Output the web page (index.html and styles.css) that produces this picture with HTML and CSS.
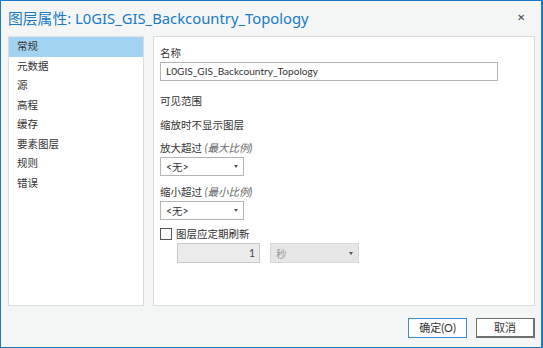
FILE: index.html
```html
<!DOCTYPE html>
<html>
<head>
<meta charset="utf-8">
<title>图层属性</title>
<link rel="stylesheet" href="styles.css">
</head>
<body>
<div class="window">
  <div class="titlebar">
    <span class="title">图层属性: L0GIS_GIS_Backcountry_Topology</span>
    <span class="close">&#x2715;</span>
  </div>
  <div class="main">
    <ul class="nav">
      <li class="active">常规</li>
      <li>元数据</li>
      <li>源</li>
      <li>高程</li>
      <li>缓存</li>
      <li>要素图层</li>
      <li>规则</li>
      <li>错误</li>
    </ul>
    <div class="pane">
      <div class="label">名称</div>
      <div class="textbox">L0GIS_GIS_Backcountry_Topology</div>
      <div class="label section">可见范围</div>
      <div class="label sub">缩放时不显示图层</div>
      <div class="label sub-tight">放大超过 <i>(最大比例)</i></div>
      <div class="combo"><span>&lt;无&gt;</span><span class="arrow"></span></div>
      <div class="label sub">缩小超过 <i>(最小比例)</i></div>
      <div class="combo"><span>&lt;无&gt;</span><span class="arrow"></span></div>
      <div class="check"><span class="box"></span>图层应定期刷新</div>
      <div class="refresh">
        <div class="num">1</div>
        <div class="unit"><span>秒</span><span class="arrow"></span></div>
      </div>
    </div>
  </div>
  <div class="footer">
    <div class="btn ok">确定(O)</div>
    <div class="btn cancel">取消</div>
  </div>
</div>
</body>
</html>
```

FILE: styles.css
```css
html,body{margin:0;padding:0}
body{font:10.5px Lato,"Noto Sans CJK SC",sans-serif;color:#333}
.window{width:543px;height:348px;box-sizing:border-box;border:1px solid #1a7bc4;border-right-width:2px;background:#f4f6f6;display:flex;flex-direction:column}
.titlebar{height:35px;display:flex;align-items:center;justify-content:space-between;padding:0 16px 3px 7px;box-sizing:border-box}
.title{font:14.8px "Noto Sans","Noto Sans CJK SC",sans-serif;color:#1a7bc4}
.close{font-size:10px;color:#444}
.main{display:flex;gap:9px;padding:0 6px 0 7px;height:270px}
.nav{list-style:none;margin:0;padding:0;width:136px;box-sizing:border-box;background:#fff;border:1px solid #dcdcdc;border-top-color:#e4e4e4}
.nav li{height:19.5px;line-height:19.5px;padding-left:8px}
.nav li.active{background:#a3d3f2}
.pane{flex:1;background:#fff;border:1px solid #dcdcdc;padding:8px 0 0 6px;box-sizing:border-box}
.label{line-height:16px}
.label.section{margin-top:12px}
.label.sub{margin-top:8px}
.label.sub-tight{margin-top:7px}
.label i{color:#666}
.textbox{margin-top:1px;width:338px;height:19px;box-sizing:border-box;border:1px solid #b4b4b4;padding-left:5px;line-height:17px;font-size:10.1px}
.combo{margin-top:1px;width:84px;height:19px;box-sizing:border-box;border:1px solid #b4b4b4;display:flex;justify-content:space-between;align-items:center;padding:0 5px}
.arrow{width:0;height:0;border-left:2px solid transparent;border-right:2px solid transparent;border-top:3px solid #555}
.check{display:flex;align-items:center;margin-top:7px;line-height:14px}
.box{width:12px;height:12px;box-sizing:border-box;border:1px solid #555;margin-right:4px;background:#fff}
.refresh{display:flex;gap:10px;margin:2px 0 0 17px}
.num{width:83px;height:20px;box-sizing:border-box;border:1px solid #c8c8c8;background:#ebebeb;text-align:right;padding-right:4px;line-height:18px;color:#444}
.unit{width:89px;height:20px;box-sizing:border-box;border:1px solid #d8d8d8;background:#e6e6e6;display:flex;justify-content:space-between;align-items:center;padding:0 5px;color:#999}
.footer{flex:1;display:flex;justify-content:flex-end;align-items:flex-start;gap:9px;padding:12px 6px 0 0}
.btn{width:59px;height:20px;box-sizing:border-box;text-align:center;line-height:17px;background:#fff;font-size:11px}
.btn.ok{border:1px solid #3c8fd6}
.btn.cancel{border:1px solid #707070;border-width:1px 2px 2px 1px}
```
